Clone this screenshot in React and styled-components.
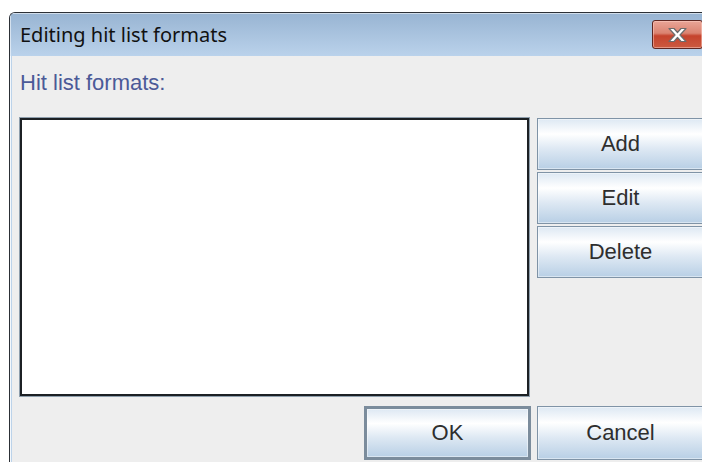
import React from "react"
import styled, { createGlobalStyle } from "styled-components"

const GlobalStyle = createGlobalStyle`
  html, body {
    margin: 0;
    padding: 0;
    background: #ffffff;
    overflow: hidden;
  }
`

const Desktop = styled.div`
  width: 702px;
  height: 462px;
  overflow: hidden;
  box-sizing: border-box;
  padding: 12px 0 0 9px;
`

const Window = styled.div`
  width: 714px;
  height: 470px;
  box-sizing: border-box;
  border: 1px solid #2c3036;
  border-right: none;
  border-bottom: none;
  border-radius: 6px 6px 0 0;
  background: #bcd3ea;
  box-shadow: inset 1px 1px 0 rgba(255, 255, 255, 0.75);
  display: flex;
  flex-direction: column;
  overflow: hidden;
`

const TitleBar = styled.div`
  height: 43px;
  flex: none;
  display: flex;
  align-items: center;
  padding: 0 0 0 10px;
  background: linear-gradient(#98b4d2, #bad2eb);
  box-shadow: inset 1px 1px 0 rgba(255, 255, 255, 0.55);
`

const Title = styled.span`
  font-family: "Noto Sans", "Open Sans", sans-serif;
  font-size: 20px;
  line-height: 27px;
  color: #111111;
`

const CloseButton = styled.button`
  margin-left: auto;
  margin-right: 20px;
  width: 51px;
  height: 29px;
  padding: 0;
  display: flex;
  align-items: center;
  justify-content: center;
  border: 1px solid #5e2722;
  border-radius: 3px;
  background: linear-gradient(#e9a597 0%, #db8371 45%, #c5432d 55%, #cb5a40 100%);
  box-shadow: inset 0 0 0 1px rgba(255, 210, 200, 0.5);
`

const Frame = styled.div`
  flex: 1;
  display: flex;
  padding-left: 2px;
  background: #bcd3ea;
  box-shadow: inset 1px 0 0 #f4f8fc;
`

const Content = styled.div`
  flex: 1;
  background: #eeeeee;
  box-sizing: border-box;
  padding: 15px 0 0 7px;
  display: grid;
  grid-template-columns: 511px 167px;
  grid-template-rows: auto 280px auto;
  column-gap: 7px;
  align-content: start;
  font-family: "Liberation Sans", Arial, sans-serif;
`

const Label = styled.div`
  grid-column: 1 / -1;
  font-size: 22px;
  line-height: 24px;
  color: #4b5a98;
  padding-left: 1px;
  margin-bottom: 22px;
`

const ListBox = styled.div`
  box-sizing: border-box;
  background: #ffffff;
  border: 2px solid #1c2024;
  box-shadow: 0 0 0 1px #8e9eac;
  margin: 1px;
`

const SideButtons = styled.div`
  display: flex;
  flex-direction: column;
  gap: 2px;
  padding-top: 1px;
`

const Button = styled.button`
  box-sizing: border-box;
  width: 167px;
  height: ${p => p.$h || 52}px;
  padding: 0;
  font-family: "Liberation Sans", Arial, sans-serif;
  font-size: 22px;
  color: #2e2e2e;
  border: ${p => (p.$focused ? "3px solid #7b8c9c" : "1px solid #7f93a6")};
  background: linear-gradient(
    #dde8f3 0%,
    #ffffff 30%,
    #dde8f3 60%,
    #b8cfe5 100%
  );
  box-shadow: inset 0 0 0 1px rgba(255, 255, 255, 0.45);
`

const Footer = styled.div`
  grid-column: 1 / -1;
  display: flex;
  justify-content: flex-end;
  gap: 6px;
  margin-top: 9px;
`

const CloseGlyph = () => (
  <svg width="21" height="16" viewBox="0 0 21 16">
    <path
      d="M2 1.5h5l3.5 4 3.5-4h5l-6 6.5 6 6.5h-5l-3.5-4-3.5 4h-5l6-6.5z"
      fill="#ffffff"
      stroke="#6b6b6b"
      strokeWidth="1.2"
      strokeLinejoin="round"
    />
  </svg>
)

const App = () => (
  <Desktop>
    <GlobalStyle />
    <Window>
      <TitleBar>
        <Title>Editing hit list formats</Title>
        <CloseButton aria-label="Close">
          <CloseGlyph />
        </CloseButton>
      </TitleBar>
      <Frame>
        <Content>
          <Label>Hit list formats:</Label>
          <ListBox />
          <SideButtons>
            <Button>Add</Button>
            <Button>Edit</Button>
            <Button>Delete</Button>
          </SideButtons>
          <Footer>
            <Button $focused $h={54}>OK</Button>
            <Button $h={54}>Cancel</Button>
          </Footer>
        </Content>
      </Frame>
    </Window>
  </Desktop>
)

export default App
